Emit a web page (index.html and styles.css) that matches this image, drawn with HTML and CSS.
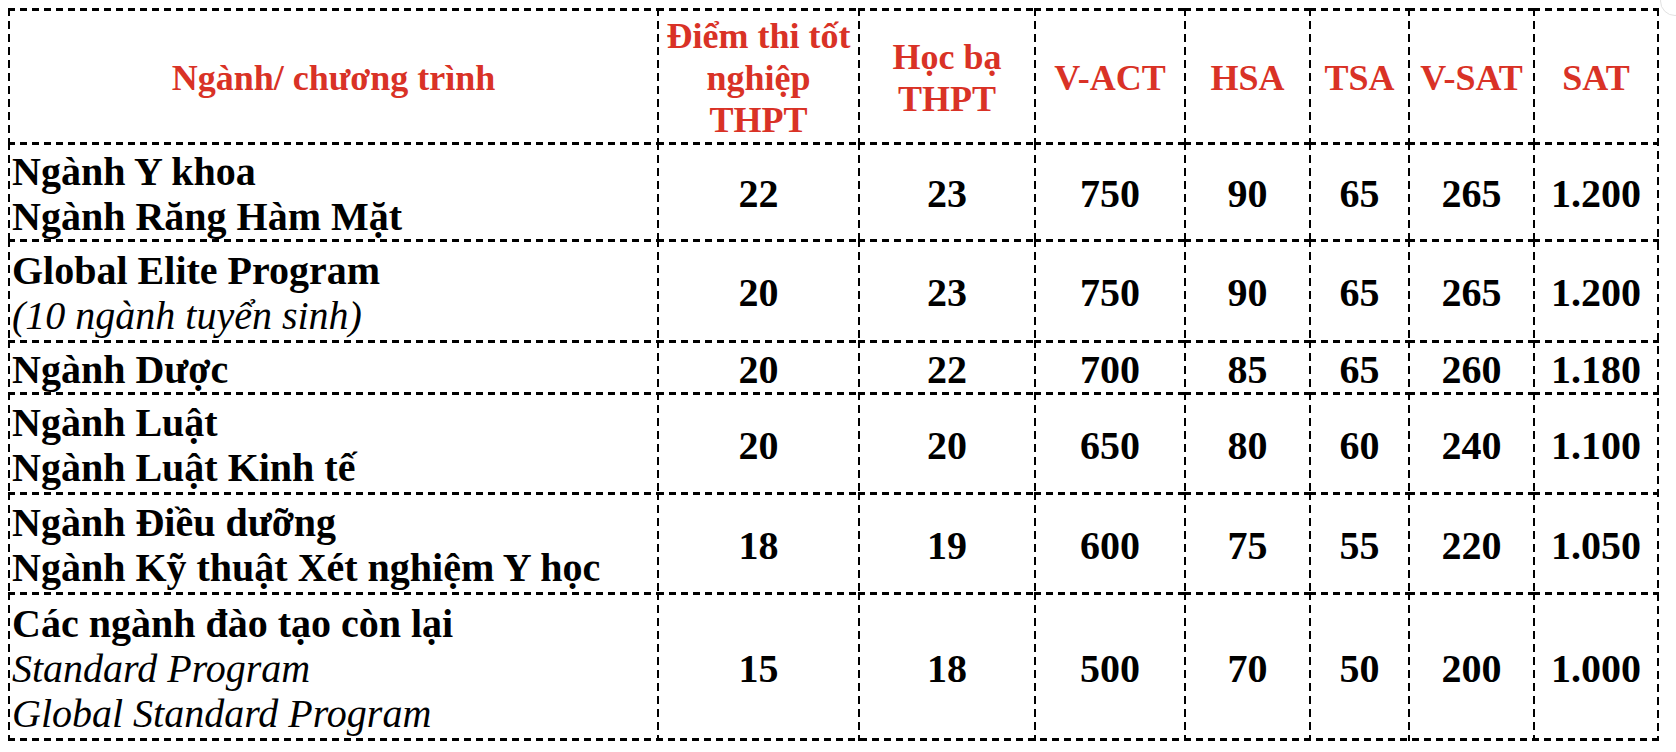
FILE: index.html
```html
<!DOCTYPE html>
<html lang="vi">
<head>
<meta charset="utf-8">
<title>Điểm sàn</title>
<link rel="stylesheet" href="styles.css">
</head>
<body>
<table class="score-table">
  <colgroup>
    <col class="c-name">
    <col class="c-thpt">
    <col class="c-hocba">
    <col class="c-vact">
    <col class="c-hsa">
    <col class="c-tsa">
    <col class="c-vsat">
    <col class="c-sat">
  </colgroup>
  <thead>
    <tr class="row-head">
      <th>Ngành/ chương trình</th>
      <th>Điểm thi tốt<br>nghiệp<br>THPT</th>
      <th>Học bạ<br>THPT</th>
      <th>V-ACT</th>
      <th>HSA</th>
      <th>TSA</th>
      <th>V-SAT</th>
      <th>SAT</th>
    </tr>
  </thead>
  <tbody>
    <tr class="row-1">
      <td class="name">Ngành Y khoa<br>Ngành Răng Hàm Mặt</td>
      <td>22</td><td>23</td><td>750</td><td>90</td><td>65</td><td>265</td><td>1.200</td>
    </tr>
    <tr class="row-2">
      <td class="name">Global Elite Program<br><em>(10 ngành tuyển sinh)</em></td>
      <td>20</td><td>23</td><td>750</td><td>90</td><td>65</td><td>265</td><td>1.200</td>
    </tr>
    <tr class="row-3">
      <td class="name">Ngành Dược</td>
      <td>20</td><td>22</td><td>700</td><td>85</td><td>65</td><td>260</td><td>1.180</td>
    </tr>
    <tr class="row-4">
      <td class="name">Ngành Luật<br>Ngành Luật Kinh tế</td>
      <td>20</td><td>20</td><td>650</td><td>80</td><td>60</td><td>240</td><td>1.100</td>
    </tr>
    <tr class="row-5">
      <td class="name">Ngành Điều dưỡng<br>Ngành Kỹ thuật Xét nghiệm Y học</td>
      <td>18</td><td>19</td><td>600</td><td>75</td><td>55</td><td>220</td><td>1.050</td>
    </tr>
    <tr class="row-6">
      <td class="name">Các ngành đào tạo còn lại<br><em>Standard Program</em><br><em>Global Standard Program</em></td>
      <td>15</td><td>18</td><td>500</td><td>70</td><td>50</td><td>200</td><td>1.000</td>
    </tr>
  </tbody>
</table>
<div class="corner-mark"></div>
</body>
</html>
```

FILE: styles.css
```css
html, body {
  margin: 0;
  padding: 0;
  background: #ffffff;
}

body {
  padding: 8px;
  font-family: "Liberation Serif", "Times New Roman", serif;
  color: #000000;
}

.score-table {
  border-collapse: separate;
  border-spacing: 0;
  table-layout: fixed;
  width: 1651px;
  /* right and bottom edges of the grid */
  background-image:
    repeating-linear-gradient(to bottom, #000 0 8px, transparent 8px 13px),
    repeating-linear-gradient(to right, #000 0 7px, transparent 7px 12px);
  background-size: 2px 100%, 100% 3px;
  background-position: right top, left bottom;
  background-repeat: no-repeat;
}

.c-name { width: 649px; }
.c-thpt { width: 201px; }
.c-hocba { width: 176px; }
.c-vact { width: 150px; }
.c-hsa { width: 125px; }
.c-tsa { width: 99px; }
.c-vsat { width: 125px; }
.c-sat { width: 126px; }

.score-table th,
.score-table td {
  border: none;
  padding: 6px 0 0 2px;
  text-align: center;
  vertical-align: middle;
  font-weight: bold;
  white-space: nowrap;
  /* top and left edges of each cell */
  background-image:
    repeating-linear-gradient(to right, #000 0 7px, transparent 7px 12px),
    repeating-linear-gradient(to bottom, #000 0 8px, transparent 8px 13px);
  background-size: 100% 3px, 2px 100%;
  background-position: left top, left top;
  background-repeat: no-repeat;
}

.score-table tr > :last-child {
  padding-right: 2px;
}

.score-table th {
  color: #d93226;
  font-size: 36px;
  line-height: 42px;
}

.score-table td {
  font-size: 40px;
  line-height: 45px;
}

.score-table td.name {
  text-align: left;
  padding-left: 4px;
}

.score-table td.name em {
  font-weight: normal;
  font-style: italic;
}

.row-head th { height: 128px; }
.row-1 td { height: 91px; }
.row-2 td { height: 95px; }
.row-3 td { height: 46px; }
.row-4 td { height: 94px; }
.row-5 td { height: 94px; }
.row-6 td { height: 141px; padding-bottom: 2px; }

.corner-mark {
  position: absolute;
  top: -14px;
  right: -14px;
  width: 28px;
  height: 28px;
  border: 1px solid #e2e2e2;
  border-radius: 50%;
}
```
